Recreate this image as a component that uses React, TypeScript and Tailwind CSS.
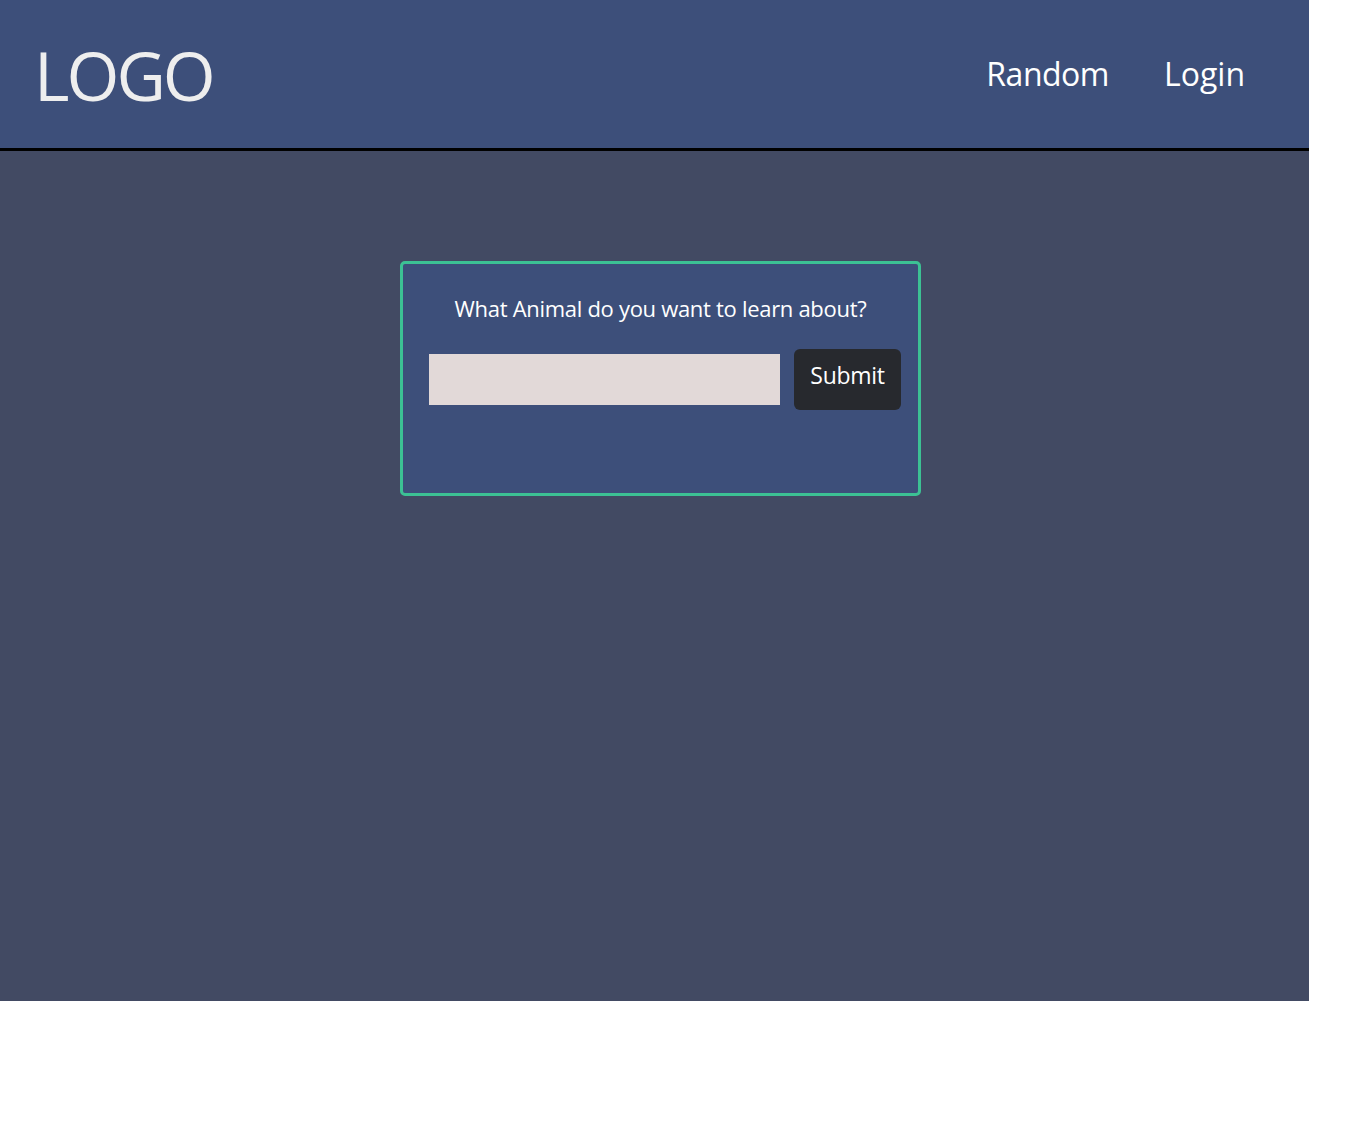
import React, { useState } from 'react';

const App: React.FC = () => {
  const [animal, setAnimal] = useState('');

  return (
    <div className="w-[1309px] h-[1001px] bg-[#424a63] flex flex-col" style={{ fontFamily: '"Open Sans", "Noto Sans", sans-serif' }}>
      <header className="h-[151px] shrink-0 bg-[#3d4f7a] border-b-[3px] border-black flex items-center justify-between pl-[34px] pr-[64px]">
        <div className="text-[68px] leading-none tracking-[-3px] text-[#eeeeee] mt-[2px]">LOGO</div>
        <nav className="flex items-center gap-[55px] text-[32px] leading-none text-white">
          <a href="#" className="tracking-[-0.5px]">Random</a>
          <a href="#" className="tracking-[0px]">Login</a>
        </nav>
      </header>

      <main className="flex justify-center pl-[12px] pt-[110px]">
        <div className="w-[521px] h-[235px] bg-[#3d4f7a] border-[3px] border-[#3cc194] rounded-[5px] flex flex-col items-center pt-[33px]">
          <p className="text-[22px] leading-none text-white tracking-[-0.3px]">What Animal do you want to learn about?</p>
          <form
            className="flex items-center w-full pl-[26px] pr-[17px] gap-[14px] mt-[30px]"
            onSubmit={(e) => e.preventDefault()}
          >
            <input
              value={animal}
              onChange={(e) => setAnimal(e.target.value)}
              className="w-[351px] h-[51px] bg-[#e2d9d8] outline-none px-2"
            />
            <button
              type="submit"
              className="w-[107px] h-[61px] bg-[#27292e] rounded-[6px] text-white text-[23px] leading-none pb-[9px] tracking-[-0.3px]"
            >
              Submit
            </button>
          </form>
        </div>
      </main>
    </div>
  );
};

export default App;
